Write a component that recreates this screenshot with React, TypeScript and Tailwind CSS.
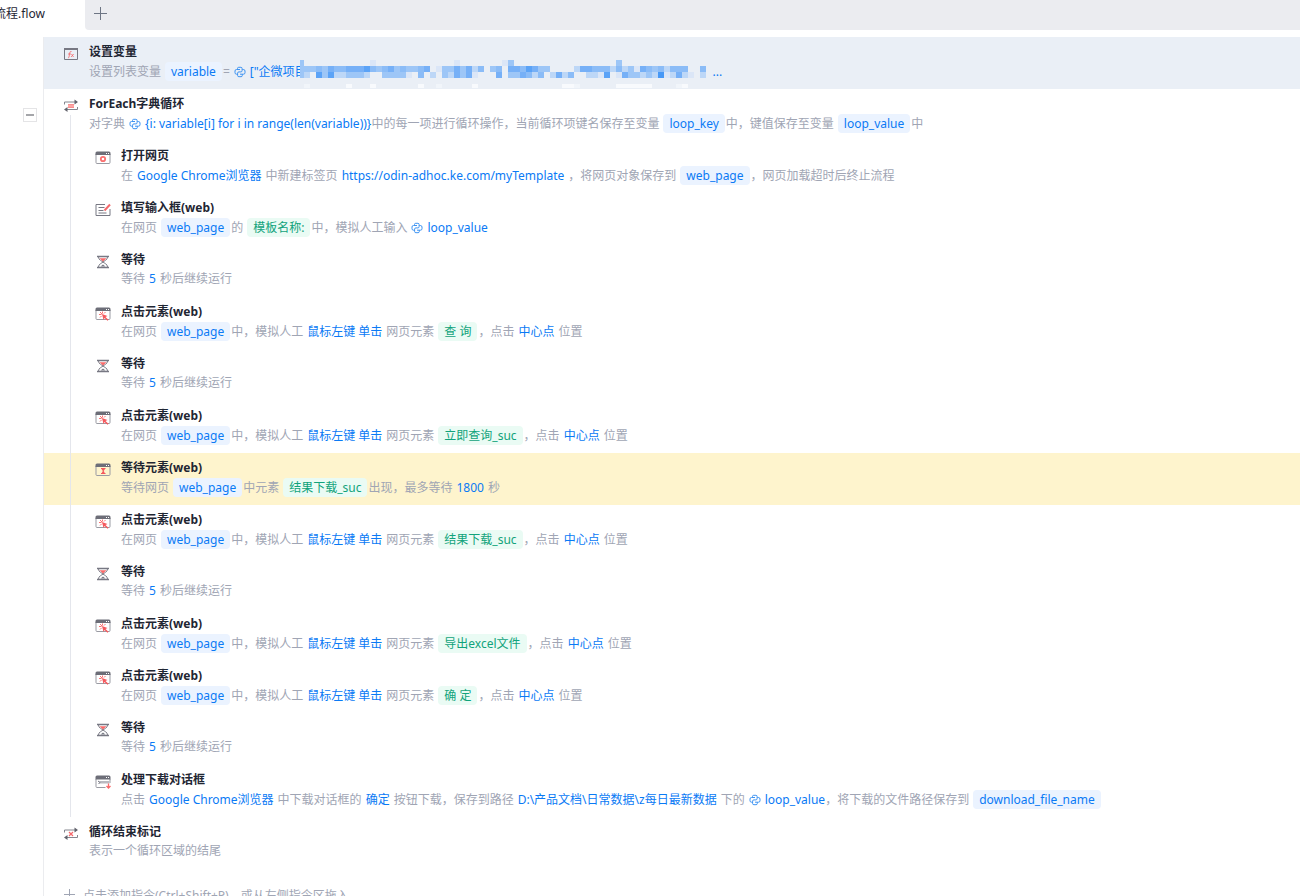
import React from 'react';

type IconName = 'variable' | 'loop' | 'open' | 'input' | 'wait' | 'click' | 'waitElement' | 'download' | 'loopEnd';

type Part =
  | { kind: 'text' | 'value' | 'variable' | 'element'; text: string }
  | { kind: 'python'; text: string; masked?: boolean };

interface Step {
  icon: IconName;
  title: string;
  parts: Part[];
  state?: 'selected' | 'warning';
}

const t = (text: string): Part => ({ kind: 'text', text });
const val = (text: string): Part => ({ kind: 'value', text });
const variable = (text: string): Part => ({ kind: 'variable', text });
const element = (text: string): Part => ({ kind: 'element', text });
const py = (text: string, masked = false): Part => ({ kind: 'python', text, masked });

const wait = (): Step => ({
  icon: 'wait',
  title: '等待',
  parts: [t('等待'), val('5'), t('秒后继续运行')],
});

const click = (target: string): Step => ({
  icon: 'click',
  title: '点击元素(web)',
  parts: [
    t('在网页'),
    variable('web_page'),
    t('中，模拟人工'),
    val('鼠标左键 单击'),
    t('网页元素'),
    element(target),
    t('，点击'),
    val('中心点'),
    t('位置'),
  ],
});

const setVariable: Step = {
  icon: 'variable',
  title: '设置变量',
  state: 'selected',
  parts: [t('设置列表变量'), variable('variable'), t('='), py('["企微项目', true)],
};

const forEach: Step = {
  icon: 'loop',
  title: 'ForEach字典循环',
  parts: [
    t('对字典'),
    py('{i: variable[i] for i in range(len(variable))}'),
    t('中的每一项进行循环操作，当前循环项键名保存至变量'),
    variable('loop_key'),
    t('中，键值保存至变量'),
    variable('loop_value'),
    t('中'),
  ],
};

const loopBody: Step[] = [
  {
    icon: 'open',
    title: '打开网页',
    parts: [
      t('在'),
      val('Google Chrome浏览器'),
      t('中新建标签页'),
      val('https://odin-adhoc.ke.com/myTemplate'),
      t('，将网页对象保存到'),
      variable('web_page'),
      t('，网页加载超时后终止流程'),
    ],
  },
  {
    icon: 'input',
    title: '填写输入框(web)',
    parts: [t('在网页'), variable('web_page'), t('的'), element('模板名称:'), t('中，模拟人工输入'), py('loop_value')],
  },
  wait(),
  click('查 询'),
  wait(),
  click('立即查询_suc'),
  {
    icon: 'waitElement',
    title: '等待元素(web)',
    state: 'warning',
    parts: [
      t('等待网页'),
      variable('web_page'),
      t('中元素'),
      element('结果下载_suc'),
      t('出现，最多等待'),
      val('1800'),
      t('秒'),
    ],
  },
  click('结果下载_suc'),
  wait(),
  click('导出excel文件'),
  click('确 定'),
  wait(),
  {
    icon: 'download',
    title: '处理下载对话框',
    parts: [
      t('点击'),
      val('Google Chrome浏览器'),
      t('中下载对话框的'),
      val('确定'),
      t('按钮下载，保存到路径'),
      val('D:\\产品文档\\日常数据\\z每日最新数据'),
      t('下的'),
      py('loop_value'),
      t('，将下载的文件路径保存到'),
      variable('download_file_name'),
    ],
  },
];

const loopEnd: Step = {
  icon: 'loopEnd',
  title: '循环结束标记',
  parts: [t('表示一个循环区域的结尾')],
};

const WindowFrame = () => (
  <>
    <path d="M1 4v8.500q0 1 1 1h12q1 0 1-1V4" stroke="#9a9ba3" />
    <path d="M.5 5V3q0-1.500 1.500-1.500h12q1.500 0 1.500 1.500v2z" fill="#6d6e78" />
    <path d="M11 3h1v1h-1zM13 3h1v1h-1z" fill="#fff" />
  </>
);

const LoopArrows = () => (
  <>
    <path d="M1.500 6.500V4H13M14.500 9V11.500H3" stroke="#85868f" />
    <path d="M11.500 1.500L15 4l-3.500 2.500zM4.500 9L1 11.500 4.500 14z" fill="#62636d" />
  </>
);

const StepIcon: React.FC<{ name: IconName }> = ({ name }) => (
  <svg viewBox="0 0 16 16" className="mt-[9px] size-4 shrink-0" fill="none" aria-hidden="true">
    {name === 'variable' && (
      <>
        <path d="M1.500 2.500h13v11h-13z" stroke="#777883" />
        <path d="M1 2h14v2H1z" fill="#777883" />
        <path
          d="M8.500 5.500q-1.500-.5-1.800 1.500l-.7 4q-.2 1-1 .8M5 8h3M8.500 8l2 3M10.700 8l-2.700 3"
          stroke="#f5676a"
          strokeWidth=".8"
        />
      </>
    )}
    {name === 'loop' && (
      <>
        <LoopArrows />
        <path d="M5 6h6v4H5z" fill="#fca5a5" />
        <path d="M5 6.500h6M5 9.500h6" stroke="#fa8f8f" />
      </>
    )}
    {name === 'loopEnd' && (
      <>
        <LoopArrows />
        <path d="M6 6l4 4M10 6l-4 4" stroke="#f5676a" strokeWidth="1.200" />
      </>
    )}
    {name === 'open' && (
      <>
        <WindowFrame />
        <circle cx="8" cy="9" r="2.200" stroke="#fa7070" strokeWidth="1.800" />
      </>
    )}
    {name === 'input' && (
      <>
        <path d="M10 2.500H1v11h14V7M3.500 5.500h6M3.500 8.500h5M3.500 11h8" stroke="#777883" />
        <path d="M9.500 8.500L15 2.500" stroke="#f5696c" strokeWidth="2" />
      </>
    )}
    {name === 'wait' && (
      <>
        <path d="M2 2.500h12M2 13.500h12" stroke="#777883" strokeWidth="1.400" />
        <path
          d="M3.500 3c0 3 3.500 4 4.500 5 1-1 4.500-2 4.500-5M3.500 13c0-3 3.500-4 4.500-5 1 1 4.500 2 4.500 5"
          stroke="#777883"
        />
        <path d="M4.500 4.300h7L8 7.600z" fill="#fa6a6a" />
        <path d="M5.500 12.500L8 10.500l2.500 2z" fill="#777883" />
      </>
    )}
    {name === 'click' && (
      <>
        <WindowFrame />
        <path d="M7.500 5.500v2M4 8.500h2.500M5 6l2 2M10.500 6L9 7.500M5 11.500l1.700-1.700" stroke="#fa7070" />
        <path d="M7 8l5.500 2-2 1 3 2.700-1 1-3-2.700-1 2z" fill="#f5595d" />
      </>
    )}
    {name === 'waitElement' && (
      <>
        <WindowFrame />
        <path d="M6 6.500h4.500M6 11.500h4.500" stroke="#f5595d" />
        <path d="M6.500 7h3.500L8.700 9l1.300 2.500H6.500L7.800 9z" fill="#f5595d" />
      </>
    )}
    {name === 'download' && (
      <>
        <path d="M1 5v7.500q0 1 1 1h8.500M15 5v4" stroke="#9a9ba3" />
        <path d="M.5 5.500V3q0-1.500 1.500-1.500h12q1.500 0 1.500 1.500v2.500z" fill="#6d6e78" />
        <path d="M11 3h1v1h-1zM13 3h1v1h-1z" fill="#fff" />
        <path d="M4.500 7h10v2.500h-10z" fill="#b9bac0" />
        <path d="M3 7l2 1.500L3.500 10" stroke="#777883" />
        <path d="M13.500 9.500v4M11.500 12l2 2 2-2" stroke="#fa6a6a" strokeWidth="1.300" />
      </>
    )}
  </svg>
);

const PythonIcon = () => (
  <svg
    viewBox="0 0 12 12"
    className="mr-1 inline-block size-3 align-[-2px]"
    fill="none"
    stroke="#3d93f2"
    aria-hidden="true"
  >
    <path d="M3.500 3.500V2.500q0-1.200 1.200-1.200h2.200q1.200 0 1.200 1.200v2.200q0 1.200-1.200 1.200H4.900q-1.300 0-1.300 1.300v1H2.500Q1 8.200 1 6.700V5q0-1.500 1.500-1.500H6" />
    <path d="M8.300 3.500h1Q11 3.500 11 5v1.700q0 1.500-1.500 1.500H6M8.300 8.200v1.300q0 1.200-1.200 1.200H4.900q-1.300 0-1.300-1.200V8" />
  </svg>
);

// one letter per 6px tile, from transparent (.) to the strongest blue (Z)
const tileColors: Record<string, string> = {
  v: '#dbe6f7',
  l: '#bdd7f7',
  m: '#9dc6f7',
  M: '#8bbcf7',
  H: '#76b0f7',
  X: '#5ba3f7',
  Z: '#4798f6',
  w: '#f8fafd',
  f: '#f1f5fa',
};

const tileRows = [
  'm...........v.............v.......vm.................m..............',
  'mmmMmHMMHHHXMmMHmMmmMH.vmmHmHlM.mM.HHMXHmm....lHHMMMlMlmvHMmMlMMM..M',
  'ml.XmXllmmml..mmmmv.M.l.mlHmHv...H.mmHMlM.lHlM..llvX.vHmmlmlZvlHlv.l',
];

const whiteTiles = '.f......w...w.......w..f.....w..............wwf......wwwwww....fw...';

const Mosaic = () => (
  <svg
    width="408"
    height="30"
    className="absolute -top-0.5 left-[66px]"
    shapeRendering="crispEdges"
    aria-hidden="true"
  >
    {tileRows.map((row, y) =>
      [...row].map((c, i) => {
        if (c === '.') return null;
        return <rect key={`${y}-${i}`} x={i * 6 - 2} y={y * 6} width="6" height="6" fill={tileColors[c]} />;
      })
    )}
    {[...whiteTiles].map((c, i) =>
      c === '.' ? null : <rect key={i} x={i * 6 - 2} y="24" width="6" height="4" fill={tileColors[c]} />
    )}
  </svg>
);

const StepPart: React.FC<{ part: Part }> = ({ part }) => {
  switch (part.kind) {
    case 'value':
      return <span className="mx-1 text-[#0a7af5]">{part.text}</span>;
    case 'variable':
      return (
        <span className="mr-px ml-1 inline-block rounded bg-[#ebf3ff] px-1.5 text-[#0a7af5]">{part.text}</span>
      );
    case 'element':
      return (
        <span className="mr-px ml-1 inline-block rounded bg-[#eafbf4] px-1.5 text-[#11a37b]">{part.text}</span>
      );
    case 'python':
      return (
        <span className="relative ml-1 inline-block text-[#0a7af5]">
          <PythonIcon />
          {part.text}
          {part.masked && (
            <>
              <span className="ml-[406px]">...</span>
              <Mosaic />
            </>
          )}
        </span>
      );
    default:
      return <span>{part.text}</span>;
  }
};

const StepRow: React.FC<{ step: Step; nested?: boolean }> = ({ step, nested }) => {
  const background = step.state === 'selected' ? 'bg-[#eaeff6]' : step.state === 'warning' ? 'bg-[#fef4cd]' : '';
  const chips = step.parts.some((p) => p.kind === 'variable');

  return (
    <li className={`flex h-13 gap-2.5 ${nested ? 'pl-[51px]' : 'pl-[19px]'} ${background}`}>
      <StepIcon name={step.icon} />
      <div className="pt-1.5 whitespace-nowrap">
        <h3 className="leading-[18px] font-bold text-[#1f2633]">{step.title}</h3>
        <p className={`mt-px text-[#a0a5b4] ${chips ? 'leading-[19px]' : 'leading-[18px]'}`}>
          {step.parts.map((part, i) => (
            <StepPart key={i} part={part} />
          ))}
        </p>
      </div>
    </li>
  );
};

const App: React.FC = () => {
  return (
    <div className="flex h-screen flex-col overflow-hidden bg-white font-['Noto_Sans','Noto_Sans_CJK_SC',sans-serif] text-xs">
      <header className="flex h-[30px] shrink-0">
        <div className="flex w-[85px] shrink-0 items-center overflow-hidden pb-0.5 text-[#1f2633]">
          <span className="-ml-1.5 whitespace-nowrap">流程.flow</span>
        </div>
        <div className="flex flex-1 rounded-bl bg-[#ebecf0] pl-[9px]">
          <button type="button" aria-label="新建" className="h-[27px]">
            <svg viewBox="0 0 13 13" className="size-[13px]" stroke="#6d7584" aria-hidden="true">
              <path d="M6.500 0v13M0 6.500h13" />
            </svg>
          </button>
        </div>
      </header>

      <div className="flex min-h-0 flex-1 pt-[7px]">
        <aside className="flex w-[43px] shrink-0 justify-end pt-[71px] pr-1.5">
          <button
            type="button"
            aria-label="折叠"
            className="flex size-[14px] items-center justify-center border border-[#e4e4e6] bg-white"
          >
            <span className="h-0.5 w-2 bg-[#a5a6aa]" />
          </button>
        </aside>

        <main className="min-w-0 flex-1 overflow-hidden border-l border-[#ebecef]">
          <ul>
            <StepRow step={setVariable} />
            <StepRow step={forEach} />
          </ul>
          <div className="relative">
            <ul>
              {loopBody.map((step, i) => (
                <StepRow key={i} step={step} nested />
              ))}
            </ul>
            <div className="absolute -top-[26px] bottom-0 left-[26px] w-px bg-[#e4e6ec]" />
          </div>
          <ul>
            <StepRow step={loopEnd} />
          </ul>
          <button type="button" className="mt-[18px] ml-5 flex items-start gap-2 leading-[18px] text-[#a0a5b4]">
            <svg viewBox="0 0 11 11" className="mt-0.5 size-[11px]" stroke="#a0a5b4" aria-hidden="true">
              <path d="M5.500 0v11M0 5.500h11" />
            </svg>
            点击添加指令(Ctrl+Shift+P)，或从左侧指令区拖入
          </button>
        </main>
      </div>
    </div>
  );
};

export default App;
